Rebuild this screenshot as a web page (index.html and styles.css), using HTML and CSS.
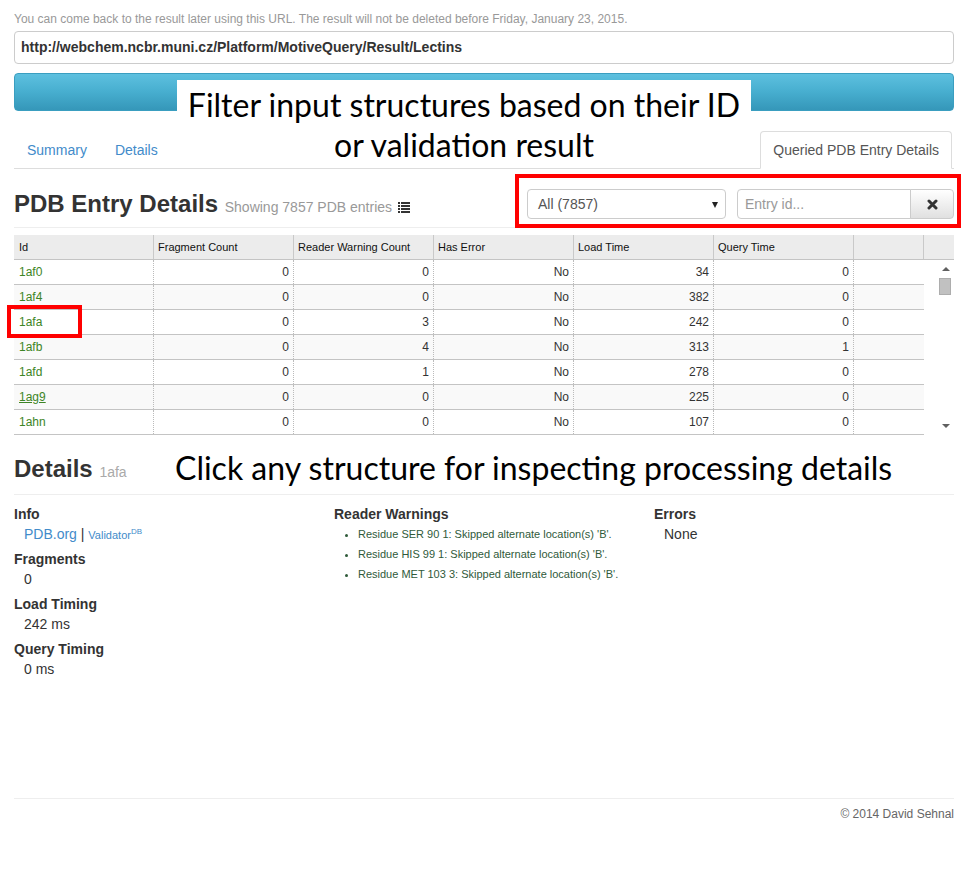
FILE: index.html
```html
<!DOCTYPE html>
<html lang="en">

<head>
  <meta charset="UTF-8">
  <title>MotiveQuery - Lectins</title>
  <link rel="stylesheet" href="styles.css">
</head>

<body>
  <div class="page">
    <div class="container">
      <p class="url-note">You can come back to the result later using this URL. The result will not be deleted before Friday, January 23, 2015.</p>
      <div class="url-box">http://webchem.ncbr.muni.cz/Platform/MotiveQuery/Result/Lectins</div>
      <div class="bar"></div>

      <ul class="tabs">
        <li class="tabs__item"><a class="tabs__link">Summary</a></li>
        <li class="tabs__item"><a class="tabs__link">Details</a></li>
        <li class="tabs__item tabs__item--active"><a class="tabs__link">Queried PDB Entry Details</a></li>
      </ul>

      <div class="entries-header">
        <h2 class="heading">PDB Entry Details <small class="heading__small">Showing 7857 PDB entries<svg class="list-icon" width="12" height="11" viewBox="0 0 12 11"><rect x="0" y="0" width="2" height="2"/><rect x="3" y="0" width="9" height="2"/><rect x="0" y="3" width="2" height="2"/><rect x="3" y="3" width="9" height="2"/><rect x="0" y="6" width="2" height="2"/><rect x="3" y="6" width="9" height="2"/><rect x="0" y="9" width="2" height="2"/><rect x="3" y="9" width="9" height="2"/></svg></small></h2>
        <div class="filters">
          <div class="select">All (7857)<span class="select__caret"></span></div>
          <div class="input-group">
            <div class="input-group__input">Entry id...</div>
            <button class="input-group__button"><svg width="11" height="11" viewBox="0 0 11 11"><path d="M2 2 L9 9 M9 2 L2 9" stroke="#333" stroke-width="3" stroke-linecap="round"/></svg></button>
          </div>
        </div>
      </div>

      <div class="grid">
        <div class="grid__header">
          <div class="grid__hcell">Id</div>
          <div class="grid__hcell">Fragment Count</div>
          <div class="grid__hcell">Reader Warning Count</div>
          <div class="grid__hcell">Has Error</div>
          <div class="grid__hcell">Load Time</div>
          <div class="grid__hcell">Query Time</div>
          <div class="grid__hcell grid__hcell--spacer"></div>
        </div>
        <div class="grid__body">
          <div class="grid__rows">
            <div class="grid__row">
              <div class="grid__cell grid__cell--id">1af0</div>
              <div class="grid__cell">0</div>
              <div class="grid__cell">0</div>
              <div class="grid__cell">No</div>
              <div class="grid__cell">34</div>
              <div class="grid__cell">0</div>
              <div class="grid__cell grid__cell--empty"></div>
            </div>
            <div class="grid__row">
              <div class="grid__cell grid__cell--id">1af4</div>
              <div class="grid__cell">0</div>
              <div class="grid__cell">0</div>
              <div class="grid__cell">No</div>
              <div class="grid__cell">382</div>
              <div class="grid__cell">0</div>
              <div class="grid__cell grid__cell--empty"></div>
            </div>
            <div class="grid__row">
              <div class="grid__cell grid__cell--id">1afa</div>
              <div class="grid__cell">0</div>
              <div class="grid__cell">3</div>
              <div class="grid__cell">No</div>
              <div class="grid__cell">242</div>
              <div class="grid__cell">0</div>
              <div class="grid__cell grid__cell--empty"></div>
            </div>
            <div class="grid__row">
              <div class="grid__cell grid__cell--id">1afb</div>
              <div class="grid__cell">0</div>
              <div class="grid__cell">4</div>
              <div class="grid__cell">No</div>
              <div class="grid__cell">313</div>
              <div class="grid__cell">1</div>
              <div class="grid__cell grid__cell--empty"></div>
            </div>
            <div class="grid__row">
              <div class="grid__cell grid__cell--id">1afd</div>
              <div class="grid__cell">0</div>
              <div class="grid__cell">1</div>
              <div class="grid__cell">No</div>
              <div class="grid__cell">278</div>
              <div class="grid__cell">0</div>
              <div class="grid__cell grid__cell--empty"></div>
            </div>
            <div class="grid__row">
              <div class="grid__cell grid__cell--id"><u>1ag9</u></div>
              <div class="grid__cell">0</div>
              <div class="grid__cell">0</div>
              <div class="grid__cell">No</div>
              <div class="grid__cell">225</div>
              <div class="grid__cell">0</div>
              <div class="grid__cell grid__cell--empty"></div>
            </div>
            <div class="grid__row">
              <div class="grid__cell grid__cell--id">1ahn</div>
              <div class="grid__cell">0</div>
              <div class="grid__cell">0</div>
              <div class="grid__cell">No</div>
              <div class="grid__cell">107</div>
              <div class="grid__cell">0</div>
              <div class="grid__cell grid__cell--empty"></div>
            </div>
          </div>
          <div class="scrollbar">
            <span class="scrollbar__up"></span>
            <span class="scrollbar__thumb"></span>
            <span class="scrollbar__down"></span>
          </div>
        </div>
      </div>

      <div class="details-header">
        <h2 class="heading">Details <small class="heading__small heading__small--light">1afa</small></h2>
      </div>

      <div class="details">
        <div class="details__col">
          <dl class="props">
            <dt>Info</dt>
            <dd><a class="link">PDB.org</a> | <a class="link link--small">Validator<sup>DB</sup></a></dd>
            <dt>Fragments</dt>
            <dd>0</dd>
            <dt>Load Timing</dt>
            <dd>242 ms</dd>
            <dt>Query Timing</dt>
            <dd>0 ms</dd>
          </dl>
        </div>
        <div class="details__col">
          <dl class="props">
            <dt>Reader Warnings</dt>
          </dl>
          <ul class="warnings">
            <li>Residue SER 90 1: Skipped alternate location(s) 'B'.</li>
            <li>Residue HIS 99 1: Skipped alternate location(s) 'B'.</li>
            <li>Residue MET 103 3: Skipped alternate location(s) 'B'.</li>
          </ul>
        </div>
        <div class="details__col details__col--last">
          <dl class="props">
            <dt>Errors</dt>
            <dd>None</dd>
          </dl>
        </div>
      </div>

      <hr class="rule">
      <footer class="footer">&copy; 2014 David Sehnal</footer>
    </div>

    <!-- annotations drawn over the page -->
    <div class="callout callout--filter">Filter input structures based on their ID<br>or validation result</div>
    <div class="callout callout--click">Click any structure for inspecting processing details</div>
    <div class="mark mark--filter"></div>
    <div class="mark mark--row"></div>
  </div>
</body>

</html>
```

FILE: styles.css
```css
body {
  margin: 0;
  font-family: "Liberation Sans", Arial, Helvetica, sans-serif;
  font-size: 14px;
  color: #333;
  background: #fff;
}

.page {
  position: relative;
  width: 968px;
  min-height: 882px;
}

.container {
  padding: 12px 14px 0;
}

.url-note {
  margin: 0;
  font-size: 12px;
  line-height: 14px;
  color: #999;
}

.url-box {
  margin-top: 5px;
  height: 33px;
  box-sizing: border-box;
  border: 1px solid #ccc;
  border-radius: 4px;
  padding: 0 6px;
  line-height: 31px;
  font-weight: bold;
  color: #333;
}

.bar {
  margin-top: 9px;
  height: 38px;
  box-sizing: border-box;
  border-radius: 4px;
  border: 1px solid #3a9ec0;
  background: linear-gradient(to bottom, #5dc0df 0%, #47aecf 50%, #3597b9 100%);
}

.tabs {
  list-style: none;
  margin: 20px 0 0;
  padding: 0;
  display: flex;
  border-bottom: 1px solid #ddd;
}

.tabs__item {
  margin-bottom: -1px;
  margin-right: 2px;
}

.tabs__link {
  display: block;
  padding: 8px 12px;
  line-height: 20px;
  border: 1px solid transparent;
  border-radius: 4px 4px 0 0;
  color: #428bca;
}

.tabs__item--active {
  margin-left: auto;
}

.tabs__item--active .tabs__link {
  color: #555;
  background: #fff;
  border-color: #ddd #ddd transparent;
}

.entries-header {
  margin-top: 20px;
  display: flex;
  justify-content: space-between;
  align-items: center;
  padding-bottom: 8px;
  border-bottom: 1px solid #eee;
}

.heading {
  margin: 0;
  font-size: 24px;
  line-height: 26px;
  font-weight: bold;
  color: #333;
}

.heading__small {
  font-size: 14px;
  line-height: 1;
  font-weight: normal;
  color: #999;
}

.heading__small--light {
  color: #aaa;
}

.list-icon {
  margin-left: 6px;
  fill: #333;
  vertical-align: -1px;
}

.filters {
  display: flex;
  gap: 11px;
}

.select {
  position: relative;
  width: 199px;
  height: 30px;
  box-sizing: border-box;
  border: 1px solid #ccc;
  border-radius: 4px;
  padding-left: 10px;
  line-height: 28px;
  color: #555;
}

.select__caret {
  position: absolute;
  right: 7px;
  top: 12px;
  border-left: 3.5px solid transparent;
  border-right: 3.5px solid transparent;
  border-top: 6px solid #222;
}

.input-group {
  display: flex;
  width: 217px;
  height: 30px;
}

.input-group__input {
  flex: 1;
  box-sizing: border-box;
  border: 1px solid #ccc;
  border-radius: 4px 0 0 4px;
  padding-left: 7px;
  line-height: 28px;
  color: #999;
}

.input-group__button {
  width: 44px;
  height: 30px;
  margin-left: -1px;
  border: 1px solid #ccc;
  border-radius: 0 4px 4px 0;
  background: linear-gradient(to bottom, #fff 0%, #e0e0e0 100%);
  padding: 0;
  display: flex;
  align-items: center;
  justify-content: center;
}

.grid {
  margin-top: 7px;
  font-size: 12px;
}

.grid__header {
  display: flex;
  height: 25px;
  box-sizing: border-box;
  background: #ececec;
  border-bottom: 1px solid #c4c4c4;
  font-size: 11px;
  line-height: 24px;
  color: #111;
}

.grid__hcell {
  width: 140px;
  box-sizing: border-box;
  padding-left: 4px;
  border-right: 1px solid #c9c9c9;
}

.grid__hcell:first-child {
  padding-left: 5px;
}

.grid__hcell--spacer {
  width: 70px;
}

.grid__body {
  display: flex;
  justify-content: space-between;
}

.grid__rows {
  width: 910px;
}

.grid__row {
  display: flex;
  height: 25px;
  box-sizing: border-box;
  border-bottom: 1px solid #c4c4c4;
  line-height: 25px;
}

.grid__row:nth-child(even) {
  background: #f9f9f9;
}

.grid__cell {
  width: 140px;
  box-sizing: border-box;
  padding-right: 4px;
  text-align: right;
  border-right: 1px dotted #bbb;
}

.grid__cell--id {
  text-align: left;
  padding-left: 5px;
  color: #3d8526;
}

.grid__cell--empty {
  width: 70px;
  border-right: none;
}

.scrollbar {
  position: relative;
  width: 17px;
  height: 175px;
}

.scrollbar__up,
.scrollbar__down {
  position: absolute;
  left: 5px;
  border-left: 4px solid transparent;
  border-right: 4px solid transparent;
}

.scrollbar__up {
  top: 7px;
  border-bottom: 4px solid #606060;
}

.scrollbar__down {
  top: 164px;
  border-top: 4px solid #606060;
}

.scrollbar__thumb {
  position: absolute;
  left: 2px;
  top: 18px;
  width: 12px;
  height: 17px;
  box-sizing: border-box;
  background: #c1c1c1;
  border: 1px solid #adadad;
}

.details-header {
  margin-top: 20px;
  padding-bottom: 12px;
  border-bottom: 1px solid #eee;
}

.details-header .heading {
  line-height: 27px;
}

.details {
  display: flex;
  margin-top: 9px;
}

.details__col {
  flex: none;
  width: 320px;
}

.details__col--last {
  flex: 1;
  width: auto;
}

.props {
  margin: 0;
}

.props dt {
  font-weight: bold;
  line-height: 20px;
}

.props dd {
  margin: 0 0 5px 10px;
  line-height: 20px;
}

.link {
  color: #428bca;
}

.link--small {
  font-size: 11px;
  line-height: 1;
}

.link--small sup {
  font-size: 8px;
  line-height: 0;
}

.warnings {
  margin: 0;
  padding-left: 24px;
  font-size: 11px;
  line-height: 20px;
  color: #2f5a3a;
}

.rule {
  margin: 114px 0 0;
  border: 0;
  border-top: 1px solid #eee;
}

.footer {
  margin-top: 8px;
  text-align: right;
  font-size: 12px;
  line-height: 14px;
  color: #666;
}

.callout {
  position: absolute;
  font-family: Lato, "Open Sans", sans-serif;
  font-size: 32px;
  line-height: 40px;
  color: #000;
}

.callout--filter {
  left: 177px;
  top: 80px;
  width: 574px;
  padding-top: 5px;
  background: #fff;
  text-align: center;
}

.callout--click {
  left: 175px;
  top: 448px;
}

.mark {
  position: absolute;
  box-sizing: border-box;
  border: 4px solid #f00;
}

.mark--filter {
  left: 515px;
  top: 174px;
  width: 446px;
  height: 54px;
}

.mark--row {
  left: 7px;
  top: 305px;
  width: 75px;
  height: 33px;
}
```
